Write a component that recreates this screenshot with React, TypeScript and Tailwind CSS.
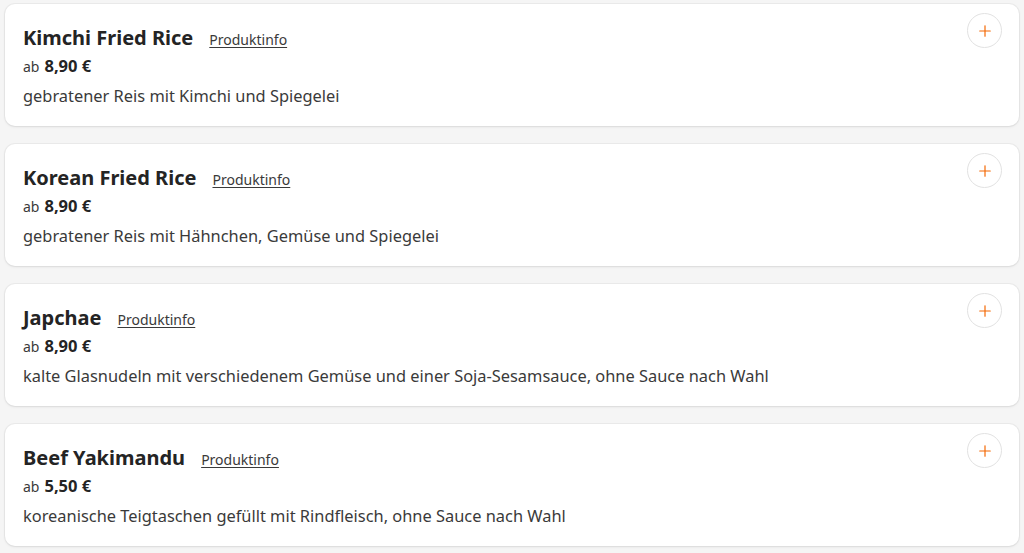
import { Plus } from 'lucide-react';

type Dish = {
  name: string;
  price: string;
  description: string;
};

const DISHES: Dish[] = [
  { name: 'Kimchi Fried Rice', price: '8,90 €', description: 'gebratener Reis mit Kimchi und Spiegelei' },
  { name: 'Korean Fried Rice', price: '8,90 €', description: 'gebratener Reis mit Hähnchen, Gemüse und Spiegelei' },
  { name: 'Japchae', price: '8,90 €', description: 'kalte Glasnudeln mit verschiedenem Gemüse und einer Soja-Sesamsauce, ohne Sauce nach Wahl' },
  { name: 'Beef Yakimandu', price: '5,50 €', description: 'koreanische Teigtaschen gefüllt mit Rindfleisch, ohne Sauce nach Wahl' },
];

function DishCard({ dish }: { dish: Dish }) {
  return (
    <div className="relative h-[122px] rounded-[10px] bg-white pl-[18px] pr-4 pt-[21px] shadow-[0_0_0_1px_rgba(0,0,0,0.04),0_1px_3px_rgba(0,0,0,0.08)]">
      <div className="flex items-baseline gap-4">
        <h3 className="text-[20px] font-bold leading-[26px] text-[#242424]">{dish.name}</h3>
        <a href="#" className="text-[14px] text-[#3a3a3a] underline underline-offset-2">
          Produktinfo
        </a>
      </div>
      <div className="mt-[4px] flex items-baseline gap-[5px] leading-[22px] text-[#242424]">
        <span className="text-[14px] text-[#3a3a3a]">ab</span>
        <span className="text-[16.5px] font-bold">{dish.price}</span>
      </div>
      <p className="mt-[7px] text-[16.4px] leading-[22px] text-[#3a3a3a]">{dish.description}</p>

      {/* add button */}
      <button
        type="button"
        className="absolute right-[17px] top-[9px] flex h-[35px] w-[35px] items-center justify-center rounded-full border border-[#e2e2e2] bg-white text-[#f36805]"
        aria-label="Hinzufügen"
      >
        <Plus size={18} strokeWidth={1.6} />
      </button>
    </div>
  );
}

export default function App() {
  return (
    <div
      className="min-h-[553px] w-[1024px] bg-[#f5f5f5] px-[5px] pt-[4px]"
      style={{ fontFamily: '"Noto Sans", "Open Sans", sans-serif' }}
    >
      <div className="flex flex-col gap-[18px]">
        {DISHES.map((d) => (
          <DishCard key={d.name} dish={d} />
        ))}
      </div>
    </div>
  );
}
